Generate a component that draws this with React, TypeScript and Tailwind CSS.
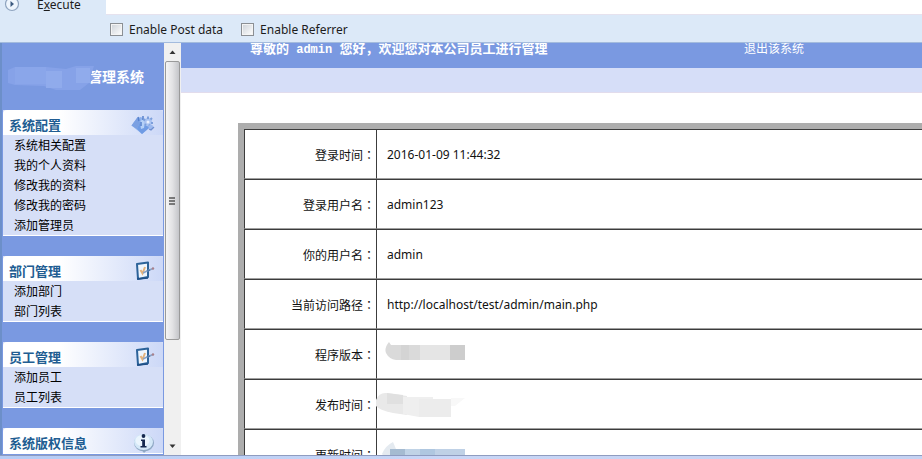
import React from 'react';

type Section = {
  title: string;
  icon: React.ReactNode;
  items: string[];
};

const GearIcon = () => (
  <svg width="24" height="20" viewBox="0 0 24 20" aria-hidden="true">
    <path d="M0.5 10.5 L6 3 L10 2 L19 9 L18 13 L11 19 Z" fill="#8fb2ec" />
    <path d="M0.5 10.5 L6 3 L9 7 L6 14 Z" fill="#7ba0e2" />
    <path d="M6 14 L9 7 L15 10 L18 13 L11 19 Z" fill="#6f9be4" />
    <path d="M9 8 L11 4 L14 7 L13 13 L10 14 Z" fill="#b4d0f7" />
    <path d="M7 2 L8 6 M12 1 L12 5 M10 7 L10 11" stroke="#5580cc" strokeWidth="1.5" />
    <circle cx="17" cy="7" r="4" fill="#a9c3f1" />
    <path d="M17 1.5 V4 M12.5 4 L14 5.5 M21 3 L19.5 4.5 M22 8 H20 M14 10 L15 9 M19 11 L18 9.5" stroke="#7d9fdb" strokeWidth="2" />
    <circle cx="17" cy="7" r="1.5" fill="#e8effd" />
    <circle cx="20" cy="12" r="2.2" fill="#9dbaf0" />
    <path d="M18 14 L20 15 L23 12" fill="none" stroke="#6f8fd0" strokeWidth="1.3" />
  </svg>
);

const NoteIcon = () => (
  <svg width="20" height="20" viewBox="0 0 20 20" aria-hidden="true">
    <path d="M2 3 L13 1.5 L13 16 L3 18 Z" fill="#eef5fd" stroke="#2b6299" strokeWidth="2" strokeLinejoin="round" />
    <path d="M2 18 L13 17" stroke="#1f4f86" strokeWidth="1.5" />
    <path d="M5.5 9 L7.5 12.5 L10 6" fill="none" stroke="#e3b27c" strokeWidth="2" />
    <path d="M8 12 L12 10 L18 7.5" fill="none" stroke="#8aa2c4" strokeWidth="1.6" />
    <path d="M12 10 L15 9" stroke="#4d78ac" strokeWidth="1.8" />
    <circle cx="18" cy="7.5" r="1.2" fill="#a7808c" />
  </svg>
);

const InfoIcon = () => (
  <svg width="22" height="22" viewBox="0 0 22 22" aria-hidden="true">
    <ellipse cx="11" cy="11" rx="10" ry="8.5" fill="#8fa8c4" />
    <path d="M8 17 L11 21 L14 18 Z" fill="#8fa8c4" />
    <ellipse cx="10.5" cy="10" rx="9.5" ry="8" fill="#d4e8f8" />
    <ellipse cx="9.5" cy="8.5" rx="7" ry="5.5" fill="#eaf5fd" />
    <circle cx="10.5" cy="4" r="1.9" fill="#15294f" />
    <path d="M8 7.5 H12 V14 H13.5 V15.5 H7.5 V14 H9.2 V9 H8 Z" fill="#15294f" />
  </svg>
);

const sections: Section[] = [
  {
    title: '系统配置',
    icon: <GearIcon />,
    items: ['系统相关配置', '我的个人资料', '修改我的资料', '修改我的密码', '添加管理员'],
  },
  { title: '部门管理', icon: <NoteIcon />, items: ['添加部门', '部门列表'] },
  { title: '员工管理', icon: <NoteIcon />, items: ['添加员工', '员工列表'] },
  { title: '系统版权信息', icon: <InfoIcon />, items: [] },
];

// Smears that hide private values
const VersionSmear = () => (
  <svg width="82" height="20" viewBox="0 0 82 20" className="block" aria-hidden="true">
    <path d="M4 0 Q-1 6 1 11 Q4 17 11 18 H36 V3 H6 Z" fill="#dadada" />
    <path d="M16 3 H24 V18 H16 Z" fill="#d4d4d4" />
    <path d="M35 3 H66 V18 H35 Z" fill="#e5e5e5" />
    <path d="M65 3 H80 V18 H65 Z" fill="#cdcdcd" />
  </svg>
);

const DateSmear = () => (
  <svg width="92" height="26" viewBox="0 0 92 26" className="block" aria-hidden="true">
    <path d="M3 8 Q6 0 14 1 L34 4 V23 L20 21 Q6 18 3 14 Z" fill="#e9e9e9" />
    <path d="M14 1 L30 3 V12 H14 Z" fill="#e0e0e0" />
    <path d="M30 5 H60 V24 L46 25 L30 22 Z" fill="#efefef" />
    <path d="M46 7 H78 V25 H46 Z" fill="#ececec" />
    <path d="M78 6 H92 L82 14 H78 Z" fill="#f8f8f8" />
  </svg>
);

const UpdateSmear = () => (
  <svg width="84" height="18" viewBox="0 0 84 18" className="block" aria-hidden="true">
    <path d="M1 12 Q4 4 12 0 L15 7 V18 H6 Z" fill="#e4eaf0" />
    <path d="M9 7 H24 V18 H9 Z" fill="#a5bbd1" />
    <path d="M24 7 H39 V18 H24 Z" fill="#c0d3e6" />
    <path d="M39 7 H54 V18 H39 Z" fill="#afc7e0" />
    <path d="M54 7 H84 V18 H54 Z" fill="#bfd1e6" />
  </svg>
);

const rows: { label: string; value?: string; smear?: React.ReactNode }[] = [
  { label: '登录时间', value: '2016-01-09 11:44:32' },
  { label: '登录用户名', value: 'admin123' },
  { label: '你的用户名', value: 'admin' },
  { label: '当前访问路径', value: 'http://localhost/test/admin/main.php' },
  { label: '程序版本', smear: <div className="absolute left-2 top-3"><VersionSmear /></div> },
  { label: '发布时间', smear: <div className="absolute -left-1 top-3"><DateSmear /></div> },
  { label: '更新时间', smear: <div className="absolute left-1 top-3"><UpdateSmear /></div> },
];

const Check = ({ id, label }: { id: string; label: string }) => (
  <div className="flex items-center gap-1.5">
    <input
      id={id}
      type="checkbox"
      className="h-[13px] w-[13px] appearance-none border border-[#8b8f94] bg-linear-to-br from-[#cdd2d8] to-white shadow-[inset_0_0_0_1px_#f4f4f4] checked:bg-[#4b74b8]"
    />
    <label htmlFor={id}>{label}</label>
  </div>
);

const Toolbar = () => (
  <header className="flex h-[43px] shrink-0 border-b border-[#a3bbdd] bg-[#dce9f8] text-xs text-[#1c1c1c]">
    <div className="flex h-3.5 w-[106px] shrink-0 items-center gap-4 pl-1">
      <svg width="17" height="14" viewBox="0 0 17 14" aria-hidden="true">
        <circle cx="8" cy="4" r="6.5" fill="#eef5fd" stroke="#8fa4bf" strokeWidth="1.2" />
        <path d="M6.5 1 L10 4 L6.5 7 Z" fill="#3c5a80" />
      </svg>
      <button type="button" className="pb-1 text-xs leading-3.5">
        E<u>x</u>ecute
      </button>
    </div>
    <div className="min-w-0 grow">
      <textarea aria-label="Address" className="block h-3.5 w-full resize-none bg-white outline-none" />
      <div className="flex h-7 items-center gap-[18px] border-t border-[#e6e2ee] pl-1 pt-0.5">
        <Check id="post" label="Enable Post data" />
        <Check id="referrer" label="Enable Referrer" />
      </div>
    </div>
  </header>
);

const Sidebar = () => (
  <nav className="w-[164px] shrink-0 overflow-hidden border-l-2 border-[#6c8fc9] bg-[#7a99e1] text-xs">
    <div className="relative flex h-[67px] items-center justify-end pr-5">
      <h1 className="text-sm font-bold text-white">管理系统</h1>
      <svg width="92" height="26" viewBox="0 0 92 26" className="absolute left-1 top-[23px]" aria-hidden="true">
        <path d="M2 4 L9 1 H40 L60 3 L70 0 H88 L85 9 L89 12 L83 17 L74 24 H50 L38 20 L9 19 L2 17 Z" fill="#86a2e8" />
        <path d="M9 1 H40 V18 H9 Z" fill="#8aa6ea" />
        <path d="M40 5 H56 V22 H40 Z M70 2 H84 V17 H70 Z" fill="#90abec" />
      </svg>
    </div>
    <div className="flex flex-col gap-5 px-px">
      {sections.map((s) => (
        <section key={s.title} className="border-b border-white bg-[#d6dff7]">
          <div className="flex h-[25px] items-center justify-between rounded-t-sm bg-linear-to-r from-white from-35% to-[#ccd8f7] pl-1.5 pr-2">
            <h2 className="pt-1.5 text-[13px] font-bold text-[#215d92]">{s.title}</h2>
            <span className="pt-1">{s.icon}</span>
          </div>
          <ul>
            {s.items.map((item) => (
              <li key={item} className="h-5 pl-[11px] pt-px leading-5">
                <a href="#" className="text-black">{item}</a>
              </li>
            ))}
          </ul>
        </section>
      ))}
    </div>
  </nav>
);

const ScrollBar = () => (
  <div className="flex w-[17px] shrink-0 flex-col bg-[#f0f0f0] px-px" aria-hidden="true">
    <svg width="15" height="18" viewBox="0 0 15 18">
      <path d="M4.5 11 L7.5 7.5 L10.5 11 Z" fill="#333" />
    </svg>
    <div className="flex h-[279px] items-center justify-center rounded-xs border border-[#9a9a9a] bg-linear-to-r from-[#f5f5f5] via-[#e2e2e4] to-[#c4c5c9]">
      <svg width="7" height="8" viewBox="0 0 7 8">
        <path d="M0 1 H6 M0 4 H6 M0 7 H6" stroke="#555" strokeWidth="1.4" />
      </svg>
    </div>
    <svg width="15" height="18" viewBox="0 0 15 18" className="mt-auto">
      <path d="M4.5 7.5 L7.5 11 L10.5 7.5 Z" fill="#333" />
    </svg>
  </div>
);

const Main = () => (
  <main className="min-w-0 grow overflow-hidden bg-white">
    <div className="flex h-[25px] bg-[#7a99e1] pl-[69px] text-white">
      <p className="w-[494px] shrink-0 whitespace-nowrap text-[13px] font-bold leading-2.5">
        尊敬的
        <span className="whitespace-pre font-['Liberation_Mono','Noto_Sans_CJK_SC',monospace] text-xs leading-2.5"> admin </span>
        您好，欢迎您对本公司员工进行管理
      </p>
      <a href="#" className="text-xs leading-3">退出该系统</a>
    </div>
    <div className="h-[25px] border-b border-[#e2dcec] bg-[#d6def8]"></div>

    <table className="ml-[57px] mt-[30px] w-full border-separate border-spacing-0 border-l-6 border-t-6 border-[#adadad] text-xs text-[#111]">
      <tbody>
        {rows.map((row) => (
          <tr key={row.label} className="h-[50px]">
            <th
              scope="row"
              className="w-[132px] whitespace-nowrap border-b border-l border-t border-b-[#a0a0a0] border-l-[#3c3c3c] border-t-[#3c3c3c] p-0 pr-px pt-0.5 text-right font-normal"
            >
              {row.label}
              <span className="font-['Noto_Sans_CJK_TC',sans-serif]">：</span>
            </th>
            <td className="relative border-b border-l border-t border-b-[#a0a0a0] border-l-[#3c3c3c] border-t-[#3c3c3c] p-0 pl-2.5 pt-0.5">
              {row.value}
              {row.smear}
            </td>
          </tr>
        ))}
      </tbody>
    </table>
  </main>
);

export default function App() {
  return (
    <div className="flex h-screen flex-col overflow-hidden bg-white font-['Noto_Sans','Noto_Sans_CJK_SC',sans-serif]">
      <Toolbar />
      <div className="flex min-h-0 grow">
        <Sidebar />
        <ScrollBar />
        <Main />
      </div>
      <footer className="h-1 shrink-0 border-t border-[#8f9cc0] bg-linear-to-r from-[#b5ccf5] via-[#c8d6f6] to-[#c5d2f2]"></footer>
    </div>
  );
}
